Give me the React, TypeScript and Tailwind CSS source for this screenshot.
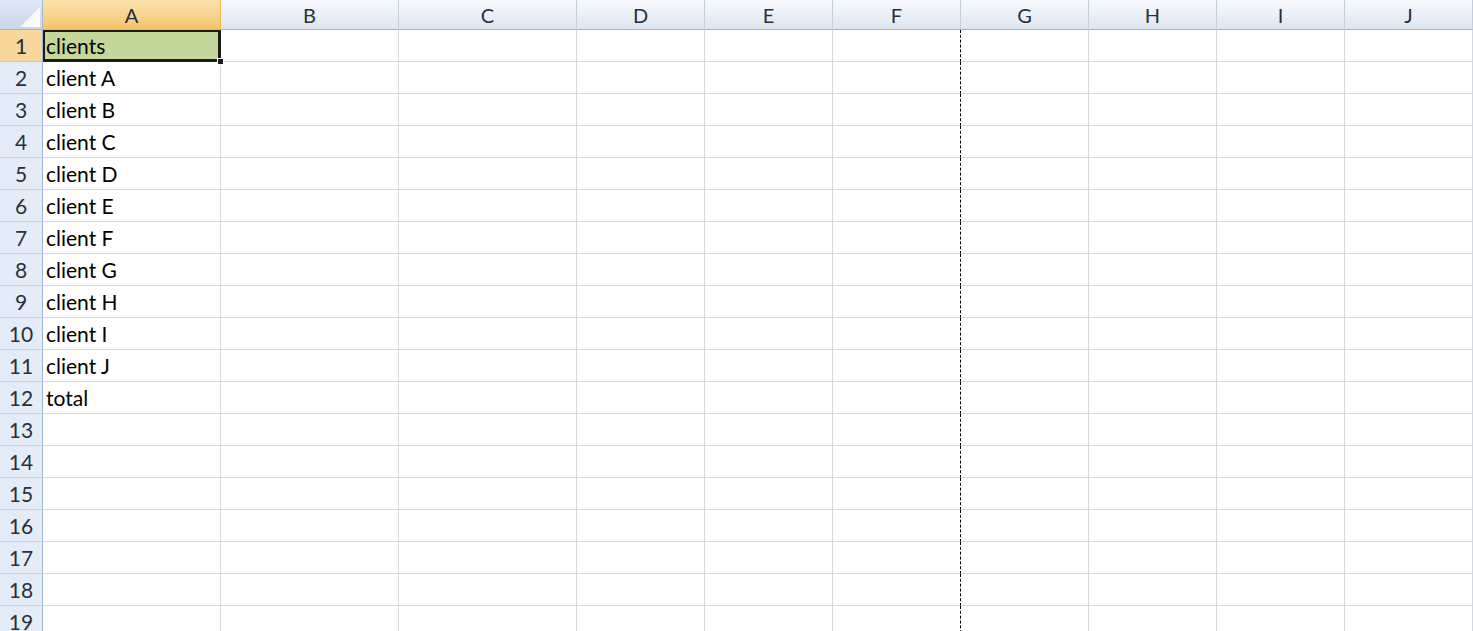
import React from "react";

const cols = ["A", "B", "C", "D", "E", "F", "G", "H", "I", "J"];
const data: Record<number, string> = {
  1: "clients",
  2: "client A",
  3: "client B",
  4: "client C",
  5: "client D",
  6: "client E",
  7: "client F",
  8: "client G",
  9: "client H",
  10: "client I",
  11: "client J",
  12: "total",
};

export default function App() {
  const rows = Array.from({ length: 19 }, (_, i) => i + 1);
  return (
    <div
      className="w-[1473px] h-[631px] overflow-hidden bg-white"
      style={{ fontFamily: "Lato, 'Open Sans', sans-serif" }}
    >
      <div className="grid grid-cols-[43px_178px_178px_178px_128px_128px_128px_128px_128px_128px_128px] grid-rows-[30px_repeat(19,32px)]">
        {/* corner */}
        <div className="relative border-r border-b border-[#9eb6ce] bg-gradient-to-b from-[#dfe8f5] to-[#c9d7ea] overflow-hidden">
          <svg className="absolute right-[2px] bottom-[2px]" width="20" height="20" viewBox="0 0 20 20">
            <defs>
              <linearGradient id="tri" x1="0" y1="0" x2="1" y2="1">
                <stop offset="0" stopColor="#ffffff" stopOpacity="0.6" />
                <stop offset="1" stopColor="#ffffff" />
              </linearGradient>
            </defs>
            <polygon points="20,0 20,20 0,20" fill="url(#tri)" />
          </svg>
        </div>
        {cols.map((c, i) => (
          <div
            key={c}
            className={
              i === 0
                ? "flex items-center justify-center border-r border-b border-[#f2b84b] bg-gradient-to-b from-[#fbe1ac] via-[#f8d590] to-[#f4c368] text-[20px] text-[#1f2d3d]"
                : "flex items-center justify-center border-r border-b border-r-[#c3cfdd] border-b-[#9eb6ce] bg-gradient-to-b from-[#f6f8fc] via-[#eaf0f8] to-[#dde6f1] text-[20px] text-[#27313d]"
            }
          >
            {c}
          </div>
        ))}
        {rows.map((r) => (
          <React.Fragment key={r}>
            <div
              className={
                r === 1
                  ? "flex items-center justify-center border-r border-b border-r-[#9eb6ce] border-b-[#f2c16f] bg-[#f9d69b] text-[21px] text-[#1f2d3d]"
                  : "flex items-center justify-center border-r border-b border-r-[#9eb6ce] border-b-[#c5d1e0] bg-[#e4ecf7] text-[21px] text-[#27313d]"
              }
            >
              {r}
            </div>
            {cols.map((c, ci) => {
              const isA1 = r === 1 && ci === 0;
              const dashed = ci === 5;
              return (
                <div
                  key={c}
                  className={
                    "relative flex items-center border-b border-b-[#d4d9e2] " +
                    (dashed
                      ? "border-r border-r-black border-dashed"
                      : "border-r border-r-[#d4d9e2]") +
                    (isA1 ? " bg-[#c4d79b]" : "")
                  }
                  style={dashed ? { borderBottomStyle: "solid", borderBottomColor: "#d4d9e2" } : undefined}
                >
                  {ci === 0 && data[r] ? (
                    <span className="pl-[3px] text-[21px] leading-none text-black whitespace-nowrap">
                      {data[r]}
                    </span>
                  ) : null}
                  {isA1 ? (
                    <>
                      <div className="absolute left-0 top-0 right-[-1px] bottom-[-1px] border-2 border-b-[3px] border-r-[3px] border-[#1b1b1b] pointer-events-none" />
                      <div className="absolute right-[-4px] bottom-[-4px] w-[7px] h-[7px] bg-[#1b1b1b] border border-white z-10 pointer-events-none" />
                    </>
                  ) : null}
                </div>
              );
            })}
          </React.Fragment>
        ))}
      </div>
    </div>
  );
}
